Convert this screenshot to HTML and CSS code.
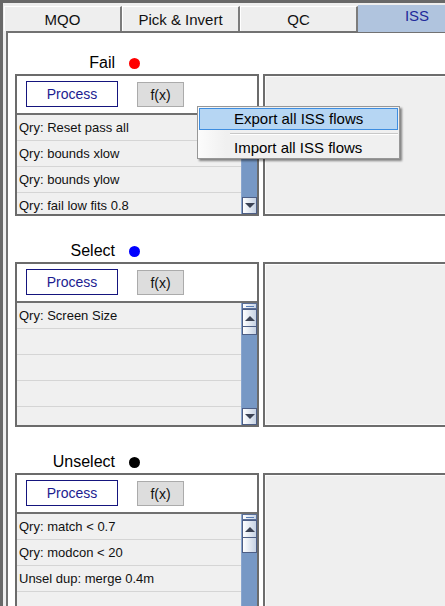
FILE: index.html
```html
<!DOCTYPE html>
<html>
<head>
<meta charset="utf-8">
<link rel="stylesheet" href="styles.css">
</head>
<body>
<div class="frame">
  <div class="tabs">
    <div class="tab">MQO</div>
    <div class="tab">Pick &amp; Invert</div>
    <div class="tab">QC</div>
    <div class="tab tab-active">ISS</div>
  </div>
  <div class="panel">
    <div class="section">
      <div class="label-row"><span class="label">Fail</span><span class="dot dot-red"></span></div>
      <div class="row">
        <div class="flow">
          <div class="toolbar">
            <div class="btn-process">Process</div>
            <div class="btn-fx">f(x)</div>
          </div>
          <div class="list list-short">
            <div class="items">
              <div class="item">Qry: Reset pass all</div>
              <div class="item">Qry: bounds xlow</div>
              <div class="item">Qry: bounds ylow</div>
              <div class="item">Qry: fail low fits 0.8</div>
            </div>
            <div class="scrollbar">
              <div class="track"></div>
              <div class="sb-btn"><span class="arrow-down"></span></div>
            </div>
          </div>
        </div>
        <div class="side"></div>
      </div>
    </div>

    <div class="section">
      <div class="label-row"><span class="label">Select</span><span class="dot dot-blue"></span></div>
      <div class="row">
        <div class="flow">
          <div class="toolbar">
            <div class="btn-process">Process</div>
            <div class="btn-fx">f(x)</div>
          </div>
          <div class="list">
            <div class="items">
              <div class="item">Qry: Screen Size</div>
              <div class="item"></div>
              <div class="item"></div>
              <div class="item"></div>
              <div class="item"></div>
            </div>
            <div class="scrollbar">
              <div class="sb-min"></div>
              <div class="sb-btn sb-up"><span class="arrow-up"></span></div>
              <div class="thumb thumb-small"></div>
              <div class="track"></div>
              <div class="sb-btn"><span class="arrow-down"></span></div>
            </div>
          </div>
        </div>
        <div class="side"></div>
      </div>
    </div>

    <div class="section">
      <div class="label-row"><span class="label">Unselect</span><span class="dot dot-black"></span></div>
      <div class="row">
        <div class="flow">
          <div class="toolbar">
            <div class="btn-process">Process</div>
            <div class="btn-fx">f(x)</div>
          </div>
          <div class="list">
            <div class="items">
              <div class="item">Qry: match &lt; 0.7</div>
              <div class="item">Qry: modcon &lt; 20</div>
              <div class="item">Unsel dup: merge 0.4m</div>
              <div class="item"></div>
              <div class="item"></div>
            </div>
            <div class="scrollbar">
              <div class="sb-min"></div>
              <div class="sb-btn sb-up"><span class="arrow-up"></span></div>
              <div class="thumb thumb-mid"></div>
              <div class="track"></div>
            </div>
          </div>
        </div>
        <div class="side"></div>
      </div>
    </div>
  </div>

  <div class="menu">
    <div class="menu-item menu-item-hover">Export all ISS flows</div>
    <div class="menu-sep"></div>
    <div class="menu-item">Import all ISS flows</div>
  </div>
</div>
</body>
</html>
```

FILE: styles.css
```css
* { box-sizing: border-box; }
html, body { margin: 0; padding: 0; }
body {
  width: 445px;
  height: 606px;
  overflow: hidden;
  font-family: "Liberation Sans", Arial, sans-serif;
  background: #eeeeee;
}
.frame {
  position: relative;
  width: 445px;
  height: 606px;
  overflow: hidden;
  border-top: 3px solid #686868;
  border-left: 3px solid #686868;
  background: #eeeeee;
  display: flex;
  flex-direction: column;
}
.tabs {
  display: flex;
  align-items: flex-end;
  height: 28px;
  padding-left: 1px;
  flex: none;
}
.tab {
  width: 118px;
  height: 25px;
  flex: none;
  background: #eeeeee;
  border-top: 1px solid #ffffff;
  border-left: 1px solid #ffffff;
  border-right: 2px solid #7c7c7c;
  font-size: 15px;
  color: #111;
  display: flex;
  align-items: center;
  justify-content: center;
}
.tab-active {
  height: 27px;
  margin-bottom: -1px;
  position: relative;
  z-index: 1;
  background: #b0c4de;
  border: none;
  color: #1f2a9a;
  align-items: flex-start;
  padding-top: 2px;
}
.panel {
  flex: 1;
  margin-left: 3px;
  border-top: 2px solid #727272;
  border-left: 2px solid #727272;
  background: #ffffff;
  padding: 18px 0 0 7px;
}
.section + .section { margin-top: 23px; }
.label-row {
  height: 23px;
  display: flex;
  align-items: center;
  padding-top: 1px;
}
.label {
  width: 100px;
  text-align: right;
  font-size: 16px;
  color: #000;
}
.dot {
  width: 11px;
  height: 11px;
  border-radius: 50%;
  margin-left: 14px;
}
.dot-red { background: #ff0000; }
.dot-blue { background: #0000ff; }
.dot-black { background: #000000; }
.row {
  display: flex;
  gap: 4px;
}
.flow {
  width: 244px;
  flex: none;
  border: 2px solid #6b6b6b;
  background: #ffffff;
}
.toolbar {
  height: 39px;
  border-bottom: 2px solid #707070;
  display: flex;
  align-items: flex-start;
  padding: 5px 0 0 9px;
}
.btn-process {
  width: 92px;
  height: 26px;
  border: 1px solid #15157e;
  background: #ffffff;
  color: #1c1c90;
  font-size: 14px;
  display: flex;
  align-items: center;
  justify-content: center;
}
.btn-fx {
  width: 47px;
  height: 25px;
  margin: 1px 0 0 19px;
  border: 1px solid #ababab;
  background: #dddddd;
  color: #111;
  font-size: 14px;
  display: flex;
  align-items: center;
  justify-content: center;
}
.list {
  height: 122px;
  display: flex;
  overflow: hidden;
  background: #f0f0f0;
}
.list-short { height: 99px; }
.items {
  flex: 1;
  overflow: hidden;
}
.item {
  height: 26px;
  line-height: 26px;
  border-bottom: 1px solid #d5d5d5;
  padding-left: 2px;
  font-size: 13px;
  color: #111;
  white-space: nowrap;
}
.scrollbar {
  width: 16px;
  flex: none;
  display: flex;
  flex-direction: column;
  background: #7798c5;
  border-left: 1px solid #8aa6cf;
}
.track { flex: 1; }
.sb-min {
  height: 6px;
  flex: none;
  background: linear-gradient(to right, #ffffff, #c8d4e6);
  border: 1px solid #5a6f98;
  display: flex;
  align-items: center;
  justify-content: center;
}
.sb-min::after {
  content: "";
  width: 8px;
  height: 1px;
  background: #5a7fb8;
}
.sb-btn {
  height: 17px;
  flex: none;
  background: linear-gradient(to right, #ffffff, #c6d2e4);
  border: 1px solid #4d5e85;
  display: flex;
  align-items: center;
  justify-content: center;
}
.sb-up { height: 18px; }
.arrow-down {
  width: 0; height: 0;
  border-left: 5px solid transparent;
  border-right: 5px solid transparent;
  border-top: 5px solid #3b4254;
}
.arrow-up {
  width: 0; height: 0;
  border-left: 5px solid transparent;
  border-right: 5px solid transparent;
  border-bottom: 5px solid #3b4254;
}
.thumb {
  flex: none;
  background: linear-gradient(to right, #ffffff, #c6d2e4);
  border: 1px solid #4d5e85;
  border-top: none;
}
.thumb-small { height: 8px; }
.thumb-mid { height: 15px; }
.side {
  width: 200px;
  flex: none;
  border: 2px solid #6d6d6d;
  background: #efefef;
  box-shadow: inset 1px 1px 0 #fbfbfb, inset -1px -1px 0 #fbfbfb;
}
.menu {
  position: absolute;
  left: 194px;
  top: 103px;
  width: 203px;
  height: 53px;
  border: 1px solid #979797;
  background: linear-gradient(to right, #fcfcfc 0, #f0f0f0 28px);
  box-shadow: 2px 2px 2px rgba(0, 0, 0, 0.45);
  padding: 1px;
  z-index: 5;
}
.menu-item {
  height: 22px;
  line-height: 20px;
  padding-left: 34px;
  font-size: 15px;
  color: #000;
  border: 1px solid transparent;
  white-space: nowrap;
}
.menu-item-hover {
  background: #b6d6f3;
  border-color: #3d8de0;
}
.menu-sep {
  margin: 3px 0 2px 31px;
  height: 2px;
  border-top: 1px solid #c8c8c8;
  border-bottom: 1px solid #ffffff;
}
```
